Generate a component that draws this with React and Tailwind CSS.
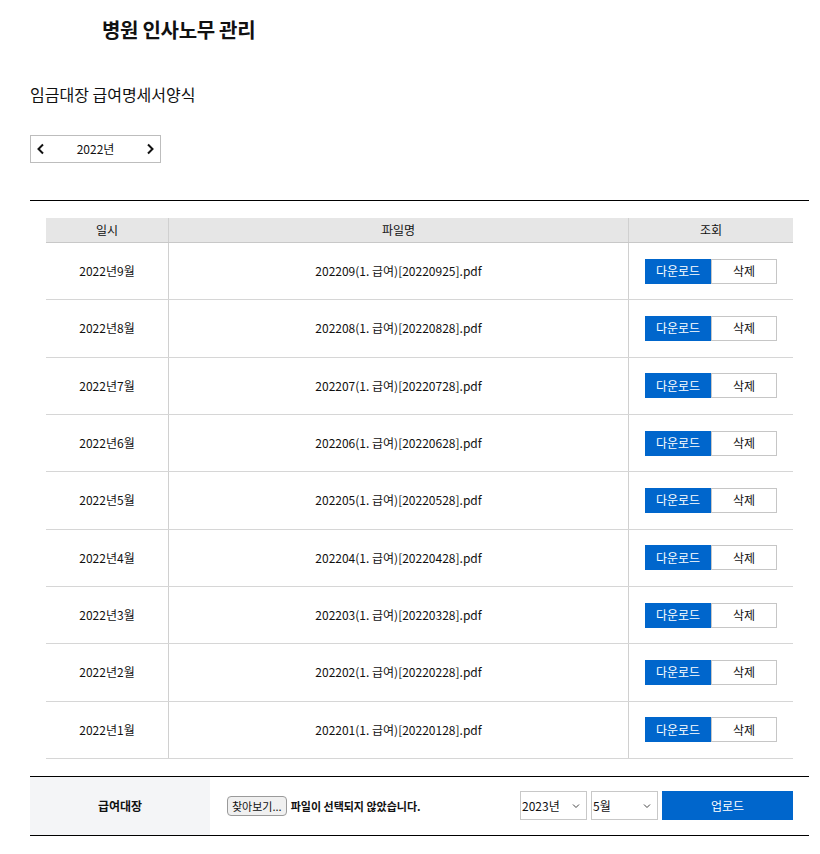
import React from "react";

const rows = [9, 8, 7, 6, 5, 4, 3, 2, 1].map((m) => {
  const mm = String(m).padStart(2, "0");
  const day = m === 9 ? "25" : "28";
  return {
    date: `2022년${m}월`,
    file: `2022${mm}(1. 급여)[2022${mm}${day}].pdf`,
  };
});

function Chevron({ dir }) {
  return (
    <svg width="10" height="12" viewBox="0 0 10 12" fill="none">
      {dir === "left" ? (
        <path d="M7 1.5 L2.5 6 L7 10.5" stroke="#111" strokeWidth="2" />
      ) : (
        <path d="M3 1.5 L7.5 6 L3 10.5" stroke="#111" strokeWidth="2" />
      )}
    </svg>
  );
}

function SmallChevron() {
  return (
    <svg width="8" height="6" viewBox="0 0 8 6" fill="none">
      <path d="M1 1.5 L4 4.5 L7 1.5" stroke="#444" strokeWidth="1" />
    </svg>
  );
}

export default function App() {
  return (
    <div
      className="w-[820px] h-[854px] bg-white text-[#111] overflow-hidden"
      style={{ fontFamily: '"Noto Sans CJK KR", "Noto Sans", sans-serif' }}
    >
      <div className="pl-[102px] pt-[16px] h-[58px]">
        <h1 className="text-[20px] font-bold leading-[28px] tracking-[-0.3px]">병원 인사노무 관리</h1>
      </div>
      <div className="pl-[30px] pt-[24px]">
        <h2 className="text-[16px] leading-[24px]">임금대장 급여명세서양식</h2>
      </div>
      <div className="pl-[30px] pt-[29px]">
        <div className="w-[131px] h-[28px] border border-[#bdbdbd] flex items-center justify-between px-[5px]">
          <Chevron dir="left" />
          <span className="text-[12px]">2022년</span>
          <Chevron dir="right" />
        </div>
      </div>
      <div className="mx-[30px] mt-[37px] border-t border-black w-[779px]">
        <div className="px-[16px] pt-[17px] pb-[17px]">
          <div className="flex h-[25px] bg-[#e6e6e6] border-b border-[#c8c8c8] text-[12px]">
            <div className="w-[123px] border-r border-[#d0d0d0] flex items-center justify-center">일시</div>
            <div className="w-[460px] border-r border-[#d0d0d0] flex items-center justify-center">파일명</div>
            <div className="flex-1 flex items-center justify-center">조회</div>
          </div>
          {rows.map((r) => (
            <div key={r.date} className="flex h-[57.33px] border-b border-[#d6d6d6] text-[12px]">
              <div className="w-[123px] border-r border-[#d0d0d0] flex items-center justify-center">{r.date}</div>
              <div className="w-[460px] border-r border-[#d0d0d0] flex items-center justify-center">{r.file}</div>
              <div className="flex-1 flex items-center pl-[16px]">
                <button className="w-[66px] h-[25px] bg-[#0066cc] text-white text-[12px] flex items-center justify-center">
                  다운로드
                </button>
                <button className="w-[66px] h-[25px] bg-white border border-[#c6c6c6] text-[12px] flex items-center justify-center">
                  삭제
                </button>
              </div>
            </div>
          ))}
        </div>
        <div className="border-t border-black border-b flex h-[60px] items-stretch">
          <div className="w-[180px] bg-[#f4f5f7] flex items-center justify-center text-[12px] font-semibold">
            급여대장
          </div>
          <div className="flex-1 flex items-center pl-[17px] pr-[16px]">
            <div className="flex items-center gap-[4px] text-[11px]">
              <span className="h-[20px] px-[4px] border border-[#9a9a9a] rounded-[4px] bg-[#f0f0f0] flex items-center">
                찾아보기...
              </span>
              <span className="font-bold">파일이 선택되지 않았습니다.</span>
            </div>
            <div className="flex-1" />
            <div className="flex items-center gap-[4px] h-[29px]">
              <div className="w-[67px] h-[29px] border border-[#c8c8c8] flex items-center justify-between pl-[1px] pr-[6px] text-[12px]">
                <span>2023년</span>
                <SmallChevron />
              </div>
              <div className="w-[67px] h-[29px] border border-[#c8c8c8] flex items-center justify-between pl-[1px] pr-[6px] text-[12px]">
                <span>5월</span>
                <SmallChevron />
              </div>
              <button className="w-[131px] h-[29px] bg-[#0066cc] text-white text-[12px] flex items-center justify-center">
                업로드
              </button>
            </div>
          </div>
        </div>
      </div>
    </div>
  );
}
